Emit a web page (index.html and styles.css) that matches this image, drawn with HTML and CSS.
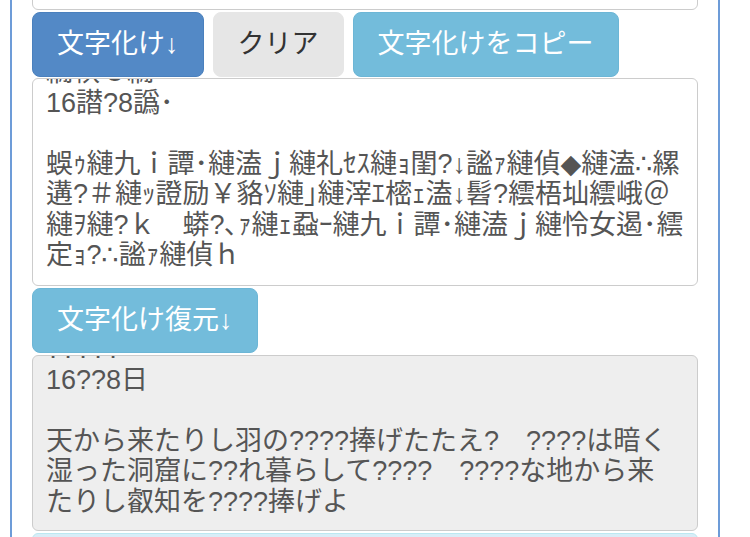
FILE: index.html
```html
<!DOCTYPE html>
<html lang="ja">
<head>
  <meta charset="UTF-8" />
  <meta name="viewport" content="width=device-width, initial-scale=1.0"/>
  <title>文字化けメーカー</title>
  <link rel="stylesheet" href="styles.css">
</head>
<body>
  <div class="page">
    <div class="field field-source"></div>

    <div class="btn-row">
      <button class="btn btn-primary">文字化け↓</button>
      <button class="btn btn-default">クリア</button>
      <button class="btn btn-info">文字化けをコピー</button>
    </div>

    <div class="field field-garbled">
      <div class="field-text">繝帙ｃ繝・・
16譛?8譌･

蜈ｩ縺九ｉ譚･縺溘ｊ縺礼ｾｽ縺ｮ閨?↓謐ｧ縺偵◆縺溘∴縲
遘?＃縺ｯ證励￥貉ｿ縺｣縺滓ｴ樒ｪ溘↓髫?繧梧圸繧峨＠
縺ｦ縺?ｋ　蟒?､ｧ縺ｪ蝨ｰ縺九ｉ譚･縺溘ｊ縺怜女遏･繧
定ｮ?∴謐ｧ縺偵ｈ</div>
    </div>

    <div class="btn-row">
      <button class="btn btn-info">文字化け復元↓</button>
    </div>

    <div class="field field-restored">
      <div class="field-text">?????
16??8日

天から来たりし羽の????捧げたたえ?　????は暗く
湿った洞窟に??れ暮らして????　????な地から来
たりし叡知を????捧げよ</div>
    </div>

    <div class="notice"></div>
  </div>
</body>
</html>
```

FILE: styles.css
```css
body {
  margin: 0;
  font-family: "Liberation Sans", Arial, "DejaVu Sans", "Noto Sans CJK JP", sans-serif;
  background-color: #fff;
  color: #333;
  overflow: hidden;
}

.page {
  width: 666px;
  margin: -100px 0 0 10px;
  padding: 0 20px;
  border-left: 2px solid #6d9cd8;
  border-right: 2px solid #6d9cd8;
}

.field {
  border: 1px solid #ccc;
  border-radius: 6px;
  background-color: #fff;
  color: #555;
  padding: 0 13px;
  overflow: hidden;
  font-size: 27px;
  line-height: 30.5px;
}

.field-source {
  height: 108px;
}

.field-garbled {
  height: 206px;
  margin-top: 1px;
}

.field-restored {
  height: 174px;
  margin-top: 2px;
  background-color: #eee;
}

.field-text {
  margin-top: -22px;
  white-space: pre;
}

.btn-row {
  display: flex;
  gap: 9px;
  margin-top: 2px;
}

.btn {
  font: inherit;
  font-size: 27px;
  line-height: 31px;
  padding: 16px 24px;
  border: 1px solid transparent;
  border-radius: 8px;
  cursor: pointer;
}

.btn-primary {
  background-color: #5389c6;
  border-color: #4a80bd;
  color: #fff;
}

.btn-default {
  background-color: #e6e6e6;
  border-color: #e6e6e6;
  color: #333;
}

.btn-info {
  background-color: #73bcdb;
  border-color: #6cb6d6;
  color: #fff;
}

.notice {
  height: 60px;
  margin-top: 2px;
  background-color: #d9edf7;
  border: 1px solid #bce8f1;
  border-radius: 6px;
}
```
